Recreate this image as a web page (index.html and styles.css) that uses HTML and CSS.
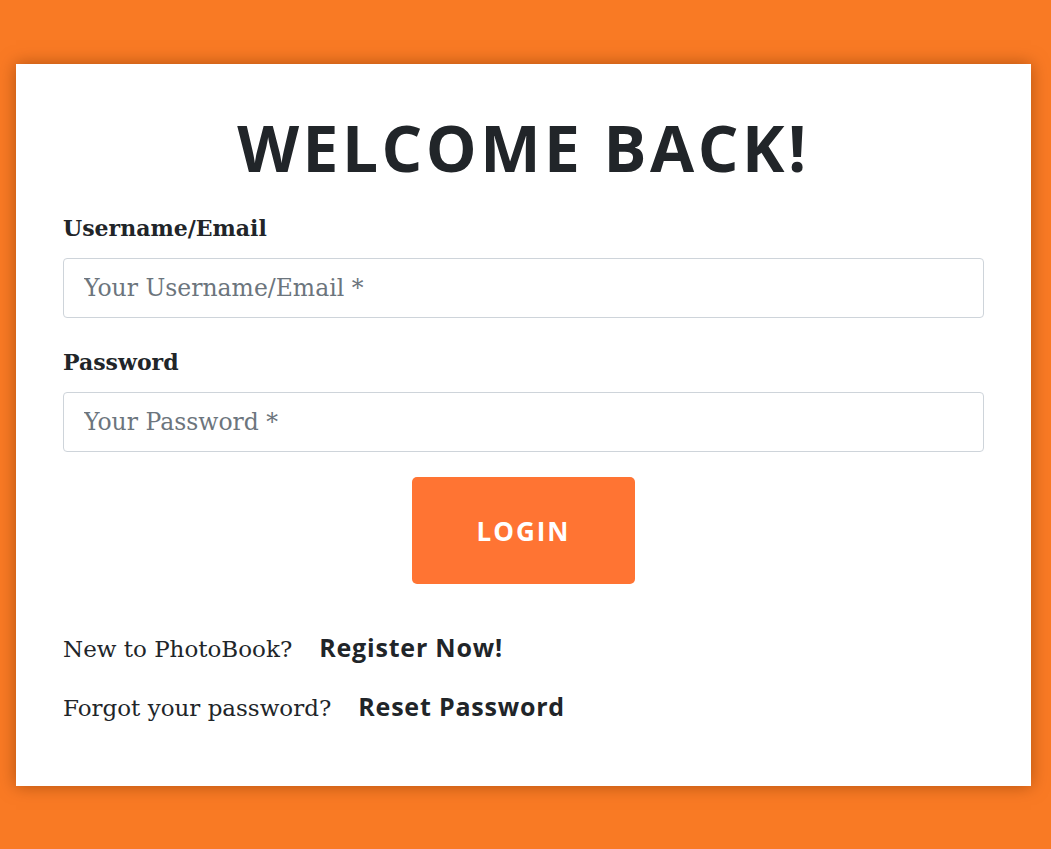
FILE: index.html
```html
<!DOCTYPE html>
<html lang="en">
<head>
<meta charset="utf-8">
<title>Login - PhotoBook</title>
<link rel="stylesheet" href="styles.css">
</head>
<body>
<main class="card">
  <h1 class="title">WELCOME BACK!</h1>
  <form class="form">
    <div class="field">
      <label class="label" for="user">Username/Email</label>
      <input class="input" id="user" type="text" placeholder="Your Username/Email *">
    </div>
    <div class="field">
      <label class="label" for="pass">Password</label>
      <input class="input" id="pass" type="password" placeholder="Your Password *">
    </div>
    <div class="actions">
      <button class="btn" type="button">LOGIN</button>
    </div>
  </form>
  <div class="links">
    <p class="link-row"><span class="muted">New to PhotoBook?</span><a class="link" href="#">Register Now!</a></p>
    <p class="link-row"><span class="muted">Forgot your password?</span><a class="link" href="#">Reset Password</a></p>
  </div>
</main>
</body>
</html>
```
FILE: styles.css
```css
html, body {
  margin: 0;
  padding: 0;
}
body {
  background: #f97a24;
  min-height: 849px;
  padding-top: 64px;
  box-sizing: border-box;
  font-family: "DejaVu Serif", serif;
  color: #212529;
}
.card {
  margin-left: 16px;
  width: 1015px;
  height: 722px;
  box-sizing: border-box;
  background: #fff;
  padding: 0 47px;
  box-shadow: 0 0 16px rgba(120, 50, 0, 0.55);
  display: flex;
  flex-direction: column;
}
.title {
  margin: 52px 0 0;
  font-family: "Open Sans", sans-serif;
  font-weight: 700;
  font-size: 64px;
  line-height: 64px;
  text-align: center;
  color: #212529;
  letter-spacing: 3.5px;
}
.form {
  display: flex;
  flex-direction: column;
  margin-top: 34px;
}
.field {
  display: flex;
  flex-direction: column;
  margin-bottom: 30px;
}
.label {
  font-weight: 700;
  font-size: 22px;
  line-height: 28px;
  margin-bottom: 16px;
  color: #212529;
}
.input {
  height: 60px;
  box-sizing: border-box;
  border: 1px solid #ced4da;
  border-radius: 4px;
  padding: 0 20px;
  font-family: "DejaVu Serif", serif;
  font-size: 23.5px;
  color: #495057;
  outline: none;
}
.input::placeholder {
  color: #6c757d;
}
.actions {
  display: flex;
  justify-content: center;
  margin-top: -5px;
}
.btn {
  width: 223px;
  height: 107px;
  background: #ff7433;
  border: none;
  border-radius: 5px;
  color: #fff;
  font-family: "Open Sans", sans-serif;
  font-weight: 700;
  font-size: 26px;
  letter-spacing: 2px;
}
.links {
  margin-top: 45px;
  display: flex;
  flex-direction: column;
  gap: 20px;
}
.link-row {
  margin: 0;
  display: flex;
  align-items: baseline;
  gap: 27px;
  font-size: 23px;
  line-height: 37px;
}
.muted {
  font-weight: 300;
  color: #212529;
}
.link {
  font-family: "Open Sans", sans-serif;
  font-weight: 700;
  font-size: 25px;
  letter-spacing: 0.8px;
  color: #212529;
  text-decoration: none;
}
```
